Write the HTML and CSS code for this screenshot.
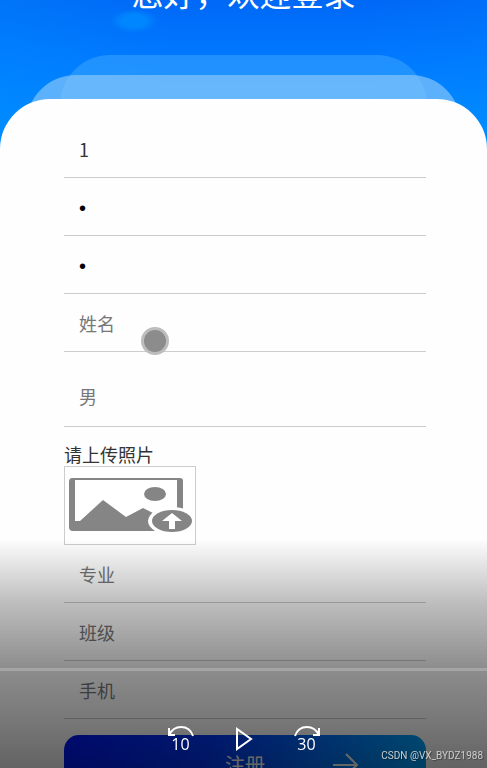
FILE: index.html
```html
<!DOCTYPE html>
<html lang="zh-CN">
<head>
    <meta charset="UTF-8">
    <meta name="viewport" content="width=device-width, initial-scale=1.0">
    <title>注册</title>
    <link rel="stylesheet" href="styles.css">
</head>
<body>
    <main class="page">
        <header class="hero">
            <h1>您好，欢迎登录</h1>
        </header>
        <div class="layer layer-back"></div>
        <div class="layer layer-middle"></div>
        <form class="card" onsubmit="event.preventDefault()">
            <input class="field" type="text" aria-label="账号" value="1">
            <input class="field" type="password" aria-label="密码" value="1">
            <input class="field" type="password" aria-label="确认密码" value="1">
            <input class="field" type="text" aria-label="姓名" placeholder="姓名">
            <select class="field gender" aria-label="性别">
                <option>男</option>
                <option>女</option>
            </select>
            <label class="upload-label" for="photo">请上传照片</label>
            <button class="upload" id="photo" type="button">
                <svg viewBox="0 0 130 77" width="130" height="77" aria-hidden="true">
                    <path fill="#858585" fill-rule="evenodd" d="M7 11H115Q118 11 118 14V61Q118 64 115 64H8Q4 64 4 60V15Q4 11 7 11ZM10 13V54H15L38 33L61 50L78 41L92 48L112 46V13Z"/>
                    <ellipse cx="90" cy="27" rx="11" ry="7" fill="#858585"/>
                    <ellipse cx="107" cy="54" rx="24" ry="14" fill="#fff"/>
                    <ellipse cx="107" cy="54" rx="20" ry="11" fill="#858585"/>
                    <path fill="#fff" d="M107 46L117 54H110V62H104V54H97Z"/>
                </svg>
            </button>
            <input class="field" type="text" aria-label="专业" placeholder="专业">
            <input class="field" type="text" aria-label="班级" placeholder="班级">
            <input class="field" type="text" aria-label="手机" placeholder="手机">
            <button class="submit" type="submit">
                <span>注册</span>
                <svg class="arrow" viewBox="0 0 28 24" width="28" height="24" aria-hidden="true">
                    <path d="M1 13H25M14 2L25 13L14 23" fill="none" stroke="currentColor" stroke-width="2"/>
                </svg>
            </button>
        </form>
        <div class="touch"></div>
    </main>
    <div class="player">
        <input class="seek" type="range" min="0" max="100" value="0" aria-label="播放进度">
        <div class="controls">
            <button type="button" aria-label="后退 10 秒">
                <svg viewBox="0 0 28 12" width="28" height="12" aria-hidden="true">
                    <path d="M2 3V10H8M2 10Q6 2 14 2Q23 2 26 11" fill="none" stroke="currentColor" stroke-width="2"/>
                </svg>
                <span>10</span>
            </button>
            <button type="button" aria-label="播放">
                <svg viewBox="0 0 28 28" width="28" height="28" aria-hidden="true">
                    <path d="M7 4V24L21 14Z" fill="none" stroke="currentColor" stroke-width="2"/>
                </svg>
            </button>
            <button type="button" aria-label="前进 30 秒">
                <svg viewBox="0 0 28 12" width="28" height="12" aria-hidden="true">
                    <path d="M26 3V10H20M26 10Q22 2 14 2Q5 2 2 11" fill="none" stroke="currentColor" stroke-width="2"/>
                </svg>
                <span>30</span>
            </button>
        </div>
        <span class="watermark">CSDN @VX_BYDZ1988</span>
    </div>
</body>
</html>
```

FILE: styles.css
```css
* {
    box-sizing: border-box;
}
body {
    margin: 0;
    font-family: "Noto Sans CJK SC", sans-serif;
    font-size: 18px;
    color: #333;
}
button, input, select {
    font: inherit;
    border: none;
    border-radius: 0;
    outline: none;
}
.page {
    position: relative;
    height: 100vh;
    overflow: hidden;
    background: radial-gradient(ellipse 24px 12px at 134px 21px, rgba(0, 140, 255, 0.8) 50%, transparent),
        linear-gradient(90deg, rgba(0, 140, 255, 0.35), transparent 35%, transparent 75%, rgba(0, 140, 255, 0.15)),
        linear-gradient(#0068f6, #0078ff 55px, #008cff 130px);
}
.hero {
    height: 95px;
    margin-top: -40px;
    color: #fff;
    text-align: center;
}
.hero h1 {
    margin: 0;
    padding-top: 12px;
    font-size: 32px;
    font-weight: 400;
    line-height: 40px;
}
.layer {
    height: 60px;
    border-radius: 50px 50px 0 0;
}
.layer-back {
    margin: 0 60px -40px;
    background: rgba(80, 180, 255, 0.4);
}
.layer-middle {
    margin: 0 26px -36px;
    background: rgba(140, 200, 250, 0.66);
}
.card {
    position: relative;
    display: flex;
    flex-direction: column;
    min-height: 100vh;
    padding: 21px 61px 40px 64px;
    border-radius: 50px 50px 0 0;
    background: #fefefe;
}
.field {
    width: 100%;
    height: 58px;
    padding: 0 15px;
    border-bottom: 1px solid #ccc;
    background: transparent;
    color: #333;
}
.field::placeholder {
    color: #777;
    opacity: 1;
}
.field[type="password"] {
    padding-top: 4px;
    font-family: "Liberation Sans", sans-serif;
    font-size: 20px;
    color: #000;
}
.gender {
    margin-top: 17px;
    padding-bottom: 4px;
    appearance: none;
    color: #777;
}
.upload-label {
    padding-top: 15px;
    line-height: 24px;
}
.upload {
    align-self: flex-start;
    padding: 0;
    border: 1px solid #ccc;
    background: #fff;
}
.upload svg {
    display: block;
}
.submit {
    position: relative;
    height: 58px;
    margin-top: 16px;
    border-radius: 15px;
    background: linear-gradient(100deg, #0018f5, #0038f5 40%, #00a8ff);
    color: #fff;
    font-size: 20px;
}
.arrow {
    position: absolute;
    right: 66px;
    top: 17px;
}
.touch {
    position: absolute;
    left: 141px;
    top: 327px;
    width: 28px;
    height: 28px;
    border: 3px solid #bdbdbd;
    border-radius: 50%;
    background: #8c8c8c;
}
.player {
    position: fixed;
    left: 0;
    right: 0;
    bottom: 0;
    height: 230px;
    padding-top: 130px;
    background: linear-gradient(transparent, rgba(0, 0, 0, 0.25) 28%, rgba(0, 0, 0, 0.44) 56%, rgba(0, 0, 0, 0.61));
}
.seek {
    display: block;
    width: 100%;
    height: 3px;
    margin: 0;
    appearance: none;
    background: rgba(255, 255, 255, 0.2);
}
.seek::-webkit-slider-thumb {
    appearance: none;
    width: 0;
    height: 0;
}
.controls {
    display: flex;
    justify-content: center;
    gap: 35px;
    padding-top: 54px;
}
.controls button {
    display: flex;
    flex-direction: column;
    align-items: center;
    width: 28px;
    padding: 0;
    background: none;
    color: #fff;
    font-family: "Open Sans", sans-serif;
    font-size: 16px;
    line-height: 14px;
}
.watermark {
    position: absolute;
    right: 4px;
    bottom: 5px;
    color: #ccc;
    font-family: Roboto, sans-serif;
    font-size: 10px;
    line-height: 14px;
    text-shadow: 1px 1px 1px rgba(0, 0, 0, 0.4);
}
```
